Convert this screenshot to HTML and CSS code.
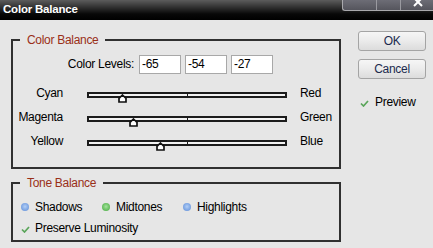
FILE: index.html
```html
<!DOCTYPE html>
<html>
<head>
<meta charset="utf-8">
<link rel="stylesheet" href="styles.css">
</head>
<body>
<div class="window">
  <div class="titlebar">
    <span class="title">Color Balance</span>
    <div class="winctl">
      <span class="seg seg1"></span>
      <span class="seg seg2"></span>
      <span class="seg seg3"><svg width="32" height="10" viewBox="0 0 32 10"><path d="M14 -2 L22 6 M22 -2 L14 6" stroke="#fff" stroke-width="2"/></svg></span>
    </div>
  </div>
  <div class="content">
    <div class="left">
      <section class="group g1">
        <span class="legend">Color Balance</span>
        <div class="levels">
          <span class="lv-label">Color Levels:</span>
          <span class="field">-65</span>
          <span class="field">-54</span>
          <span class="field">-27</span>
        </div>
        <div class="sliders">
          <span class="sl-l">Cyan</span>
          <div class="track"><span class="thumb" style="left:35px"><svg width="9" height="9" viewBox="0 0 9 9"><path d="M4.5 1 L8 4.3 V8 H1 V4.3 Z" fill="#fff" stroke="#111" stroke-width="1.7"/></svg></span></div>
          <span class="sl-r">Red</span>
          <span class="sl-l">Magenta</span>
          <div class="track"><span class="thumb" style="left:46px"><svg width="9" height="9" viewBox="0 0 9 9"><path d="M4.5 1 L8 4.3 V8 H1 V4.3 Z" fill="#fff" stroke="#111" stroke-width="1.7"/></svg></span></div>
          <span class="sl-r">Green</span>
          <span class="sl-l">Yellow</span>
          <div class="track"><span class="thumb" style="left:73px"><svg width="9" height="9" viewBox="0 0 9 9"><path d="M4.5 1 L8 4.3 V8 H1 V4.3 Z" fill="#fff" stroke="#111" stroke-width="1.7"/></svg></span></div>
          <span class="sl-r">Blue</span>
        </div>
      </section>
      <section class="group g2">
        <span class="legend">Tone Balance</span>
        <div class="tones">
          <span class="radio"><i class="dot blue"></i>Shadows</span>
          <span class="radio"><i class="dot green"></i>Midtones</span>
          <span class="radio"><i class="dot blue"></i>Highlights</span>
        </div>
        <div class="check-row">
          <svg class="check" width="9" height="7" viewBox="0 0 9 7"><path d="M1 3.5 L3.5 6 L8 1" fill="none" stroke="#5aa55a" stroke-width="1.7"/></svg>
          <span>Preserve Luminosity</span>
        </div>
      </section>
    </div>
    <div class="right">
      <button class="btn">OK</button>
      <button class="btn btn2">Cancel</button>
      <div class="check-row preview">
        <svg class="check" width="9" height="7" viewBox="0 0 9 7"><path d="M1 3.5 L3.5 6 L8 1" fill="none" stroke="#5aa55a" stroke-width="1.7"/></svg>
        <span>Preview</span>
      </div>
    </div>
  </div>
</div>
</body>
</html>
```
FILE: styles.css
```css
* { box-sizing: border-box; }
html, body { margin: 0; padding: 0; }
body {
  background: #e6e6e6;
  font-family: "Liberation Sans", Arial, sans-serif;
  font-size: 12px;
  letter-spacing: -0.3px;
  color: #000;
  width: 433px;
  height: 248px;
  overflow: hidden;
}
.window { width: 433px; height: 248px; }

.titlebar {
  position: relative;
  height: 20px;
  background: linear-gradient(#5c5c5c 0px, #2c2c2c 8px, #080808 14px, #000 20px);
}
.title {
  display: block;
  padding-left: 3px;
  font-weight: bold;
  font-size: 11.5px;
  letter-spacing: -0.2px;
  line-height: 18px;
  color: #fff;
}
.winctl {
  position: absolute;
  top: 0;
  right: 0;
  width: 91px;
  height: 11px;
  display: flex;
  border: 1px solid #a9a9ad;
  border-top: none;
  border-right: none;
  border-bottom-left-radius: 3px;
  background: linear-gradient(#6d6d76, #55555d);
  overflow: hidden;
}
.seg { display: block; height: 100%; }
.seg1 { width: 34px; border-right: 1px solid #9a9aa0; }
.seg2 { width: 24px; border-right: 1px solid #9a9aa0; }
.seg3 { flex: 1; }
.seg3 svg { display: block; margin-left: -1px; }

.content {
  display: flex;
  padding-left: 11px;
}
.left {
  width: 330px;
  padding-top: 19px;
}
.right {
  margin-left: 17px;
  padding-top: 11px;
  display: flex;
  flex-direction: column;
  align-items: flex-start;
}

.group {
  position: relative;
  border: 2px solid #303030;
}
.legend {
  position: absolute;
  top: -8px;
  left: 7px;
  padding: 0 7px;
  line-height: 14px;
  background: #e6e6e6;
  color: #9a2f18;
}
.g1 { padding: 14px 0 12px 0; }
.g2 { margin-top: 13px; padding: 12px 0 3px 8px; }

.levels {
  display: flex;
  align-items: center;
  height: 19px;
  gap: 4px;
}
.lv-label {
  width: 121px;
  margin-right: 1px;
  text-align: right;
  line-height: 19px;
}
.field {
  width: 42px;
  height: 19px;
  border: 1px solid #a8a8a8;
  background: #fff;
  padding-left: 2px;
  line-height: 17px;
}

.sliders {
  margin-top: 9px;
  display: grid;
  grid-template-columns: 74px 213px 1fr;
  grid-auto-rows: 24px;
}
.sl-l {
  padding-right: 24px;
  text-align: right;
  line-height: 21px;
  align-self: start;
}
.sl-r {
  line-height: 21px;
  align-self: start;
}
.track {
  position: relative;
  align-self: center;
  width: 200px;
  height: 6px;
  border: 2px solid #1c1c1c;
  background: #f2f2f2;
}
.track::after {
  content: "";
  position: absolute;
  left: 98px;
  top: 0;
  width: 1px;
  height: 2px;
  background: #1c1c1c;
}
.thumb {
  position: absolute;
  top: 0;
  margin-left: -6.5px;
  width: 9px;
  height: 9px;
  z-index: 1;
}
.thumb svg { display: block; }

.tones {
  display: grid;
  grid-template-columns: 81px 81px auto;
  height: 23px;
  align-items: center;
}
.radio {
  display: flex;
  align-items: center;
  line-height: 23px;
}
.dot {
  display: block;
  width: 8px;
  height: 8px;
  border-radius: 50%;
  margin-right: 6px;
  margin-bottom: 2px;
}
.dot.blue {
  background: radial-gradient(circle at 50% 45%, #b4cff4 0, #8db2ea 40%, #5d8bd6 100%);
}
.dot.green {
  background: radial-gradient(circle at 50% 45%, #a6e2a0 0, #7acb72 40%, #44a640 100%);
}

.check-row {
  display: flex;
  align-items: center;
  height: 18px;
  line-height: 18px;
}
.check { display: block; margin-right: 5px; margin-top: 2px; }
.g2 .check-row .check { margin-left: 0; }

.btn {
  display: block;
  width: 68px;
  height: 20px;
  padding: 0;
  border: 1px solid #a4a4a4;
  border-radius: 3px;
  background: linear-gradient(#f6f6f6 0%, #ececec 45%, #dcdcdc 100%);
  font-family: "Liberation Sans", Arial, sans-serif;
  font-size: 12px;
  letter-spacing: -0.3px;
  color: #1c2a4e;
  line-height: 18px;
  text-align: center;
}
.btn2 { margin-top: 8px; }
.preview { margin-top: 14px; padding-left: 2px; }
.preview .check { margin-right: 6px; }
```
